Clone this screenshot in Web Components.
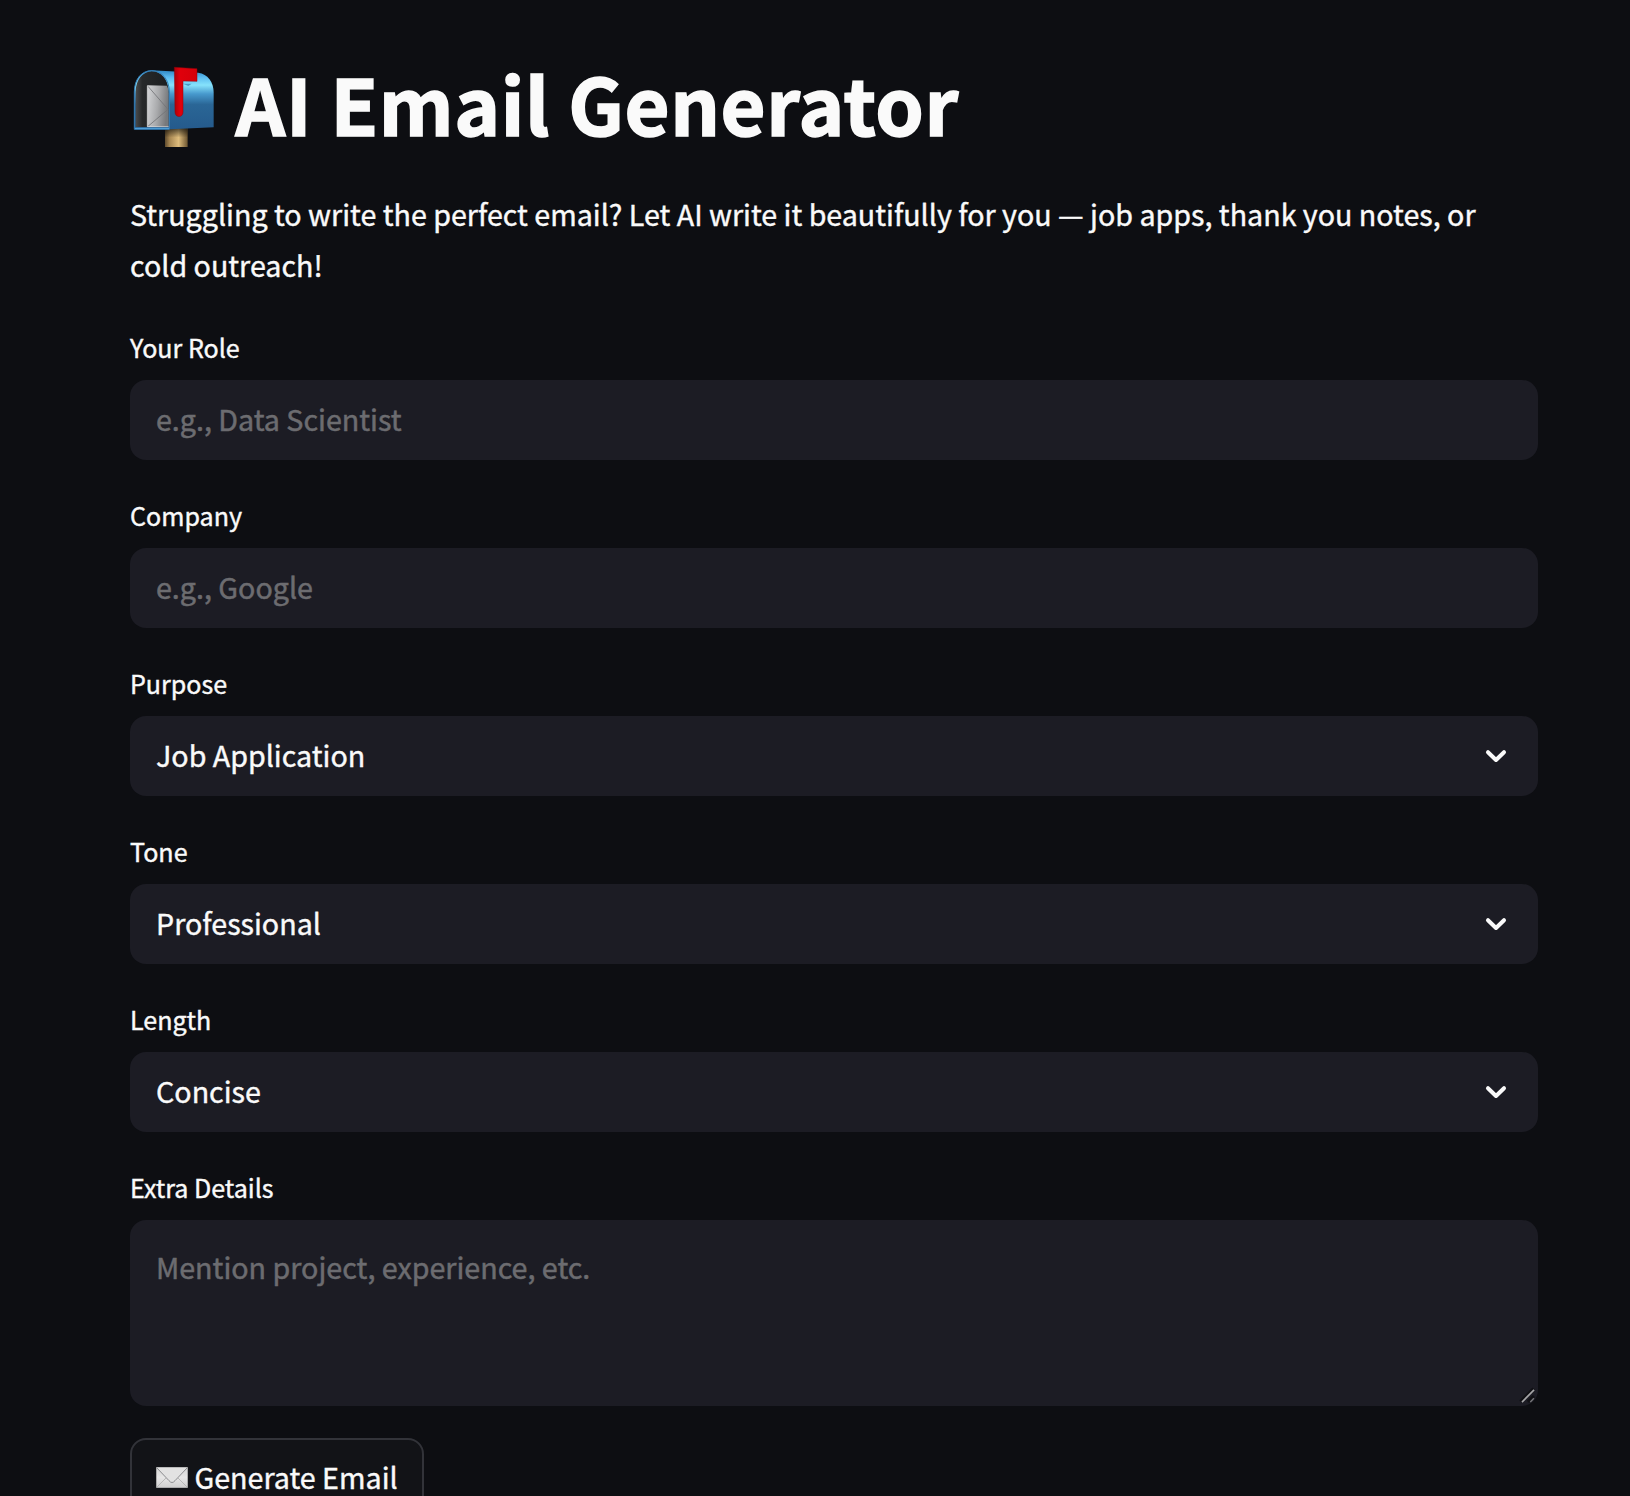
<!DOCTYPE html>
<html lang="en">
<head>
<meta charset="utf-8">
<title>AI Email Generator</title>
<style>
html,body{margin:0;background:#0d0e12}
body{height:1496px;overflow:hidden;color:#fafafa;font-family:"Noto Sans CJK SC","Noto Sans",sans-serif}
</style>
</head>
<body>
<email-app></email-app>
<script>
function define(name, html) {
  const t = document.createElement('template');
  t.innerHTML = html;
  customElements.define(name, class extends HTMLElement {
    connectedCallback() {
      if (this.shadowRoot) return;
      this.attachShadow({ mode: 'open' }).appendChild(t.content.cloneNode(true));
    }
  });
}

define('mailbox-icon', `<style>:host{display:block;flex:none;width:86px;height:84px}svg{display:block;width:100%;height:100%}</style>
<svg viewBox="30 45 258 252" aria-hidden="true">
<defs>
<linearGradient id="b" x1="0" y1="0" x2="0" y2="1"><stop offset="0" stop-color="#2f86c2"/><stop offset=".12" stop-color="#5cbcf0"/><stop offset=".25" stop-color="#86e2fb"/><stop offset=".4" stop-color="#4799cd"/><stop offset=".58" stop-color="#2a6696"/><stop offset="1" stop-color="#255a8c"/></linearGradient>
<linearGradient id="p"><stop offset="0" stop-color="#5f4b2d"/><stop offset=".2" stop-color="#a58551"/><stop offset=".6" stop-color="#dfbd7d"/><stop offset="1" stop-color="#6b5430"/></linearGradient>
<linearGradient id="s" x1="0" y1="0" x2="0" y2="1"><stop offset="0" stop-color="#000" stop-opacity=".65"/><stop offset=".5" stop-color="#000" stop-opacity="0"/></linearGradient>
<linearGradient id="e" x1="0" y1="0" x2="1" y2=".2"><stop offset="0" stop-color="#d6d7d9"/><stop offset=".55" stop-color="#a9aaac"/><stop offset="1" stop-color="#77797c"/></linearGradient>
<linearGradient id="i"><stop offset="0" stop-color="#4a4b4c"/><stop offset=".2" stop-color="#27292a"/><stop offset="1" stop-color="#1b1d1f"/></linearGradient>
<linearGradient id="r"><stop offset="0" stop-color="#a90008"/><stop offset=".25" stop-color="#e0000b"/><stop offset="1" stop-color="#d4000a"/></linearGradient>
</defs>
<path d="M135 234h68v57h-68z" fill="url(#p)"/><path d="M135 234h68v57h-68z" fill="url(#s)"/>
<path d="M95 61L235 68C263 72 281 95 281 128V232L150 238H43V126C43 88 64 63 95 61Z" fill="url(#b)"/>
<path d="M95 64C123 64 145 88 146 125V231H47V126C47 89 68 65 95 64Z" fill="url(#i)"/>
<path d="M82 106L141 107Q146 116 146 130V231H82Z" fill="url(#e)"/>
<path d="M84 109L144 178L84 229" fill="none" stroke="#727477" stroke-width="2.5"/><path d="M82 107V230H146" fill="none" stroke="#dedfe0" stroke-width="2"/>
<path d="M43 238V126C43 88 64 62 95 62C125 62 148 88 148 126V238Z" fill="none" stroke="#357fb8" stroke-width="3"/>
<path d="M45 235H147" stroke="#4f9dd4" stroke-width="4"/>
<path d="M189 101L205 108L215 101Z" fill="#347fae" opacity=".7"/>
<path d="M163 52L231 56V94L189 93V186C189 204 165 204 165 186Z" fill="url(#r)" stroke="#930008" stroke-width="1.5"/>
</svg>`);

define('envelope-icon', `<style>:host{display:block;flex:none;width:32px;height:21px}svg{display:block}</style>
<svg width="32" height="21" viewBox="0 0 96 63" aria-hidden="true"><defs><linearGradient id="g" x1="0" y1="0" x2="0" y2="1"><stop offset="0" stop-color="#d4d4d4"/><stop offset=".5" stop-color="#e6e6e6"/><stop offset="1" stop-color="#cfcfcf"/></linearGradient></defs>
<rect x="1" y="1" width="94" height="61" rx="2" fill="url(#g)" stroke="#b5b5b5" stroke-width="2"/>
<path d="M3 60L30 33M93 60L66 33" stroke="#b0b0b0" stroke-width="2.5"/>
<path d="M2 2L39 41Q48 52 57 41L94 2" fill="#e2e2e2" stroke="#8c8d90" stroke-width="3"/></svg>`);

define('app-title', `<style>:host{display:flex;align-items:flex-start;height:106px}
mailbox-icon{margin-top:16px}
h1{margin:0 0 0 19.5px;font-size:77.6px;letter-spacing:.64px;line-height:106px;font-weight:700;white-space:nowrap;-webkit-text-stroke:1.6px}</style>
<mailbox-icon></mailbox-icon><h1><slot></slot></h1>`);

define('form-field', `<style>:host{display:block;margin-bottom:35px}
.label{font-size:25.07px;line-height:40px;margin-bottom:13px;-webkit-text-stroke:.4px}</style>
<div class="label"><slot name="label"></slot></div><slot></slot>`);

define('text-box', `<style>:host{display:flex;box-sizing:border-box;height:80px;padding:0 26px;background:#1c1c24;border-radius:16px;color:#6c6c70;font-size:28.65px;line-height:77px;-webkit-text-stroke:.5px}</style><span><slot></slot></span>`);

define('select-box', `<style>:host{display:flex;justify-content:space-between;box-sizing:border-box;height:80px;padding:0 30px 0 26px;background:#1c1c24;border-radius:16px;font-size:28.65px;line-height:77px;-webkit-text-stroke:.4px}
svg{margin-top:32px}</style><span><slot></slot></span>
<svg width="24" height="16" viewBox="0 0 24 16" fill="none" stroke="#fafafa" stroke-width="4" stroke-linecap="round" stroke-linejoin="round" aria-hidden="true"><path d="M4 4.2L12 12L20 4.2"/></svg>`);

define('text-area', `<style>:host{display:flex;justify-content:space-between;box-sizing:border-box;height:186px;padding:0 0 0 26px;background:#1c1c24;border-radius:16px;color:#6c6c70;font-size:28.65px;line-height:93px;-webkit-text-stroke:.5px}
svg{align-self:flex-end}</style><span><slot></slot></span>
<svg width="20" height="20" viewBox="0 0 20 20" fill="none" stroke-linecap="square" aria-hidden="true"><path d="M3.5 14.5L14.5 3.5M11 14.8L14.8 11" stroke="#101014" stroke-width="3"/><path d="M4.5 15.5L15.5 4.5" stroke="#a6a6a8" stroke-width="1.6"/><path d="M12.8 15.4L15.4 12.8" stroke="#77777b" stroke-width="1.4"/></svg>`);

define('action-button', `<style>:host{display:flex;box-sizing:border-box;width:294px;height:80px;padding:0 24px;border:2px solid #323339;border-radius:16px;background:#121317;font-size:28.65px;line-height:73px;white-space:nowrap;-webkit-text-stroke:.4px}
envelope-icon{margin:27px 6.5px 0 0}</style><envelope-icon></envelope-icon><span><slot></slot></span>`);

define('email-app', `<style>:host{display:block;box-sizing:border-box;padding:49px 92px 0 130px}
p{margin:33px 0 37px;font-size:28.65px;line-height:51px;-webkit-text-stroke:.4px}
form-field:last-of-type{margin-bottom:32px}</style>
<app-title>AI Email Generator</app-title>
<p>Struggling to write the perfect email? Let AI write it beautifully for you — job apps, thank you notes, or<br>cold outreach!</p>
<form-field><span slot="label">Your Role</span><text-box>e.g., Data Scientist</text-box></form-field>
<form-field><span slot="label">Company</span><text-box>e.g., Google</text-box></form-field>
<form-field><span slot="label">Purpose</span><select-box>Job Application</select-box></form-field>
<form-field><span slot="label">Tone</span><select-box>Professional</select-box></form-field>
<form-field><span slot="label">Length</span><select-box>Concise</select-box></form-field>
<form-field><span slot="label">Extra Details</span><text-area>Mention project, experience, etc.</text-area></form-field>
<action-button>Generate Email</action-button>`);
</script>
</body>
</html>
